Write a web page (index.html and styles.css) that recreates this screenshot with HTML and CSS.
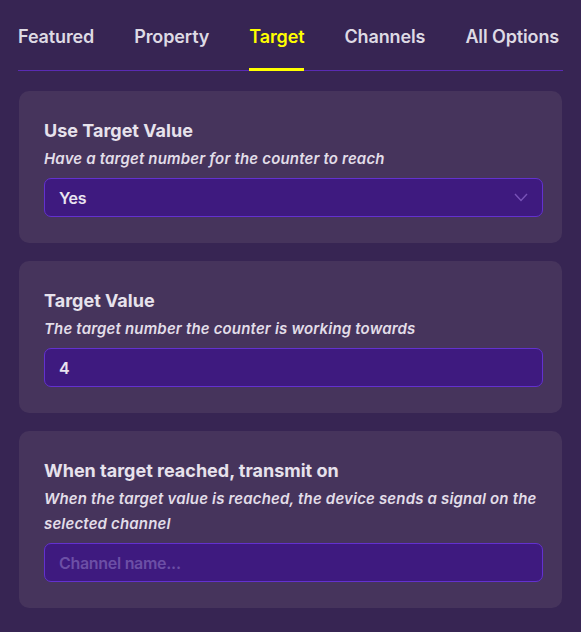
FILE: index.html
```html
<!DOCTYPE html>
<html lang="en">
<head>
<meta charset="utf-8">
<link rel="stylesheet" href="styles.css">
</head>
<body>
<div class="panel">
  <nav class="tabs">
    <div class="tab">Featured</div>
    <div class="tab">Property</div>
    <div class="tab active">Target</div>
    <div class="tab">Channels</div>
    <div class="tab">All Options</div>
  </nav>
  <div class="cards">
    <section class="card">
      <div class="title">Use Target Value</div>
      <div class="desc">Have a target number for the counter to reach</div>
      <div class="field select">
        <span>Yes</span>
        <svg class="chev" width="14" height="9" viewBox="0 0 14 9"><path d="M1 1 L7 7.5 L13 1" fill="none" stroke="#7853b8" stroke-width="1.4"/></svg>
      </div>
    </section>
    <section class="card">
      <div class="title">Target Value</div>
      <div class="desc">The target number the counter is working towards</div>
      <div class="field"><span>4</span></div>
    </section>
    <section class="card">
      <div class="title">When target reached, transmit on</div>
      <div class="desc">When the target value is reached, the device sends a signal on the selected channel</div>
      <div class="field"><span class="placeholder">Channel name...</span></div>
    </section>
  </div>
</div>
</body>
</html>
```
FILE: styles.css
```css
html, body {
  margin: 0;
  padding: 0;
  background: #372553;
  font-family: Inter, "Noto Sans", sans-serif;
  color: #e6e1ec;
}
.panel {
  padding: 0 18px 0 18px;
  width: 545px;
}
.tabs {
  display: flex;
  gap: 40px;
  border-bottom: 1px solid #5a2bb4;
  box-sizing: border-box;
  height: 71px;
}
.tab {
  flex-shrink: 0;
  white-space: nowrap;
  font-size: 18px;
  font-weight: 600;
  letter-spacing: -0.12px;
  color: #dedae4;
  padding-top: 25px;
  height: 70px;
  box-sizing: border-box;
  line-height: 24px;
  border-bottom: 3px solid transparent;
  margin-bottom: -1px;
}
.tab.active {
  color: #ffff00;
  border-bottom-color: #ffff00;
  height: 71px;
}
.cards {
  display: flex;
  flex-direction: column;
  gap: 18px;
  padding-top: 20px;
  padding-left: 1px;
}
.card {
  background: #46345c;
  border-radius: 10px;
  padding: 28px 19px 26px 25px;
  width: 543px;
  box-sizing: border-box;
}
.title {
  font-size: 18px;
  font-weight: 700;
  line-height: 24px;
  letter-spacing: 0;
  color: #e7e2ec;
}
.desc {
  margin-top: 3px;
  font-size: 15px;
  font-style: italic;
  font-weight: 600;
  line-height: 25px;
  letter-spacing: 0.17px;
  color: #e2dde8;
}
.field {
  margin-top: 7px;
  height: 39px;
  box-sizing: border-box;
  border: 1px solid #6331cf;
  border-radius: 7px;
  background: #3e1a7f;
  display: flex;
  align-items: center;
  justify-content: space-between;
  padding: 0 14px 0 14px;
  font-size: 16px;
  font-weight: 600;
  letter-spacing: -0.3px;
  color: #e9e4f0;
}
.placeholder {
  color: #6c4fa6;
}
.chev {
  display: block;
}
```
